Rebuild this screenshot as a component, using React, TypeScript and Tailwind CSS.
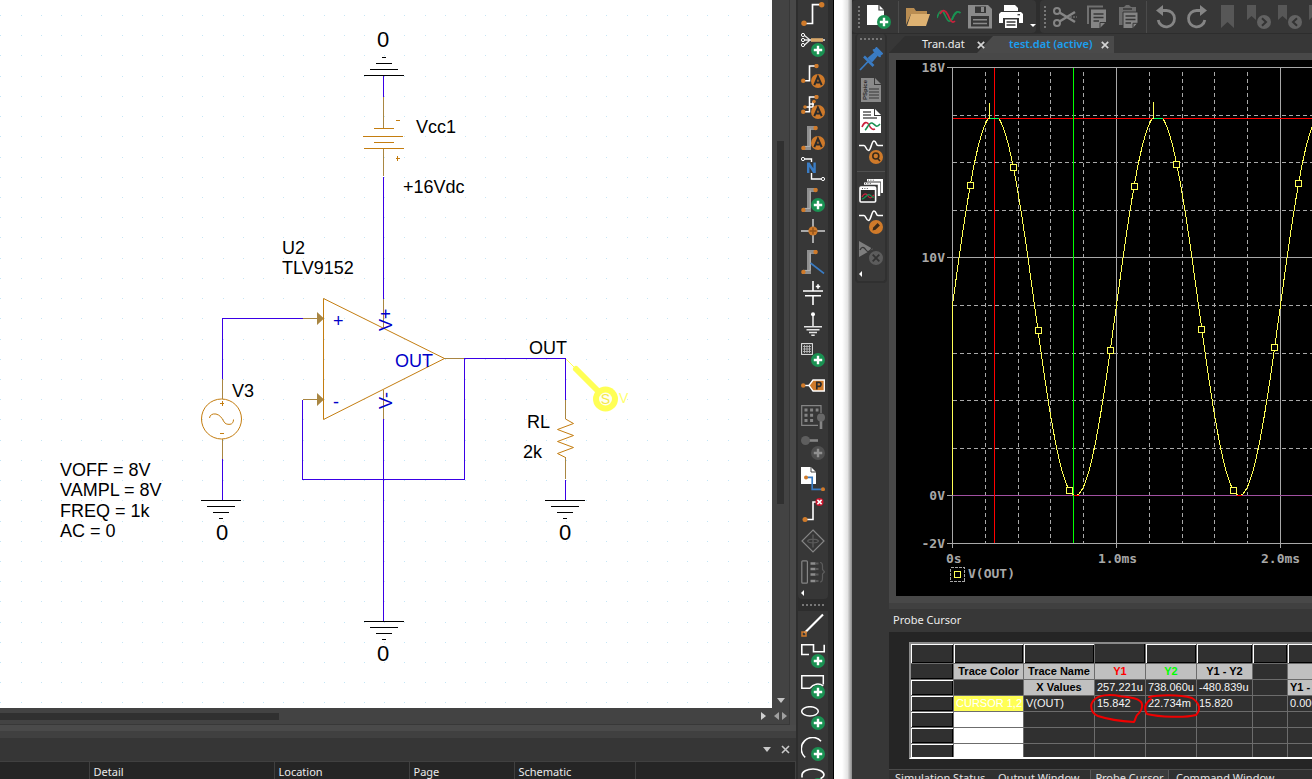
import type { ReactNode } from 'react';

const BUS = '#8f8f8f';
const ORANGE = '#cf7a2a';
const GRAY = '#858585';

/* ---------- shared icon parts ---------- */

function Icon({ children }: { children: ReactNode }) {
  return (
    <svg width="24" height="24" viewBox="0 0 24 24" fill="none" aria-hidden="true">
      {children}
    </svg>
  );
}

function Plus({ fill = '#1a9152', stroke = '#fff' }: { fill?: string; stroke?: string }) {
  return (
    <g>
      <circle cx="17" cy="17" r="7" fill={fill} />
      <path d="M17 12.8V21.2M12.8 17H21.2" stroke={stroke} strokeWidth="2.4" />
    </g>
  );
}

function BadgeA() {
  return (
    <g>
      <circle cx="17" cy="17" r="7" fill={ORANGE} />
      <path d="M13.3 21.2L16.9 12.6L20.7 21.2M14.6 18.6H19.4" stroke="#2b2b2b" strokeWidth="2" />
    </g>
  );
}

function Dot({ x, y, r = 2.2 }: { x: number; y: number; r?: number }) {
  return <circle cx={x} cy={y} r={r} fill={ORANGE} />;
}

function BusLine() {
  return (
    <g>
      <path d="M2 22H8V2H14" stroke={BUS} strokeWidth="4" />
      <path d="M2 20.4H9.2V2.6" stroke="#b4b4b4" strokeWidth="1" />
      <Dot x={2.4} y={22} />
      <Dot x={14.6} y={2} />
    </g>
  );
}

/* ---------- schematic toolbar ---------- */

const drawTools = [
  {
    label: 'Place wire',
    icon: (
      <>
        <path d="M3 21.5H11.5V2.7H20" stroke="#fff" strokeWidth="1.7" />
        <Dot x={3} y={21.3} r={2.7} />
        <Dot x={20.7} y={2.7} r={2.7} />
      </>
    ),
  },
  {
    label: 'Place net group',
    icon: (
      <>
        <path d="M3.5 2.5L9 7L3.5 12M3.5 7H24" stroke="#e8e8e8" strokeWidth="1.3" />
        <circle cx="2" cy="2" r="1.6" stroke="#fff" />
        <circle cx="2" cy="7" r="1.6" stroke="#fff" />
        <circle cx="2" cy="12" r="1.6" stroke="#fff" />
        <path d="M10 7H22" stroke="#d9a86a" strokeWidth="3.6" />
        <Plus />
      </>
    ),
  },
  {
    label: 'Auto connect two points',
    icon: (
      <>
        <path d="M2 16.7H8.5V2H15" stroke="#fff" strokeWidth="1.6" />
        <Dot x={2.2} y={16.7} />
        <Dot x={15.5} y={2} />
        <BadgeA />
      </>
    ),
  },
  {
    label: 'Auto connect multi points',
    icon: (
      <>
        <path d="M2 16.7H8.5V2H15M4 12H12V7H13M8.5 9H13" stroke="#fff" strokeWidth="1.5" />
        <Dot x={2.2} y={16.7} />
        <Dot x={15.5} y={2} />
        <Dot x={4} y={12} r={1.8} />
        <Dot x={13} y={6.6} r={1.8} />
        <BadgeA />
      </>
    ),
  },
  { label: 'Auto connect to bus', icon: <><BusLine /><BadgeA /></> },
  {
    label: 'Place net alias',
    icon: (
      <>
        <path d="M3.5 2H10.5V5M10.5 16V22H20" stroke="#fff" strokeWidth="1.4" />
        <circle cx="2" cy="2" r="1.6" stroke="#fff" />
        <circle cx="22" cy="22" r="1.6" stroke="#fff" />
        <path d="M6 5.5H8.6L12.4 11.4V5.5H14.8V16H12.2L8.4 10V16H6Z" fill="#3a7cc4" />
      </>
    ),
  },
  { label: 'Place bus', icon: <><BusLine /><Plus /></> },
  {
    label: 'Place junction',
    icon: (
      <>
        <path d="M12 0V24M0 12H24" stroke="#d0d0d0" strokeWidth="1.5" />
        <circle cx="12" cy="12" r="4.6" fill={ORANGE} />
        <path d="M12 8.5V15.5M8.5 12H15.5" stroke="#8f531c" strokeWidth="1.4" />
      </>
    ),
  },
  { label: 'Place bus entry', icon: <><BusLine /><path d="M9.5 13L23 23.5" stroke="#3a7cc4" strokeWidth="1.6" /></> },
  {
    label: 'Place power',
    icon: <path d="M12 0V10M2 10H22M4 14.7H20M12 14.7V24M14.8 5.5H19.2M17 3.3V7.7" stroke="#fff" strokeWidth="1.6" />,
  },
  {
    label: 'Place ground',
    icon: (
      <>
        <path d="M12 2V14.7M3 14.7H21M5.5 17.7H18.5M8 20.5H16M10.3 23.2H13.7" stroke="#e4e4e4" strokeWidth="1.6" />
        <circle cx="12" cy="2.2" r="2" fill="#fff" />
      </>
    ),
  },
  {
    label: 'Place hierarchical block',
    icon: (
      <>
        <rect x=".6" y=".6" width="10.8" height="10.8" stroke="#e8e8e8" />
        <path d="M3.5 2V10M6 2V10M8.5 2V10M2 3.5H10M2 6H10M2 8.5H10" stroke="#b9b9b9" strokeWidth=".9" />
        <Plus />
      </>
    ),
  },
  {
    label: 'Place port',
    icon: (
      <>
        <path d="M3 11.5H8" stroke="#fff" strokeWidth="1.4" />
        <Dot x={2.2} y={11.5} />
        <path d="M8 11.5L12 6H23.3V17H12Z" fill={ORANGE} stroke="#fff" strokeWidth="1.3" />
        <path d="M15.8 15.6V8.3H18A2 2 0 0 1 18 12.4H15.8" stroke="#2b2b2b" strokeWidth="1.7" />
      </>
    ),
  },
  {
    label: 'Place pin array',
    icon: (
      <>
        <path d="M20 8V.7H.7V20.3H17" stroke={GRAY} strokeWidth="1.2" />
        <path d="M3.5 5H17.5M3.5 10.3H13M3.5 15.6H13" stroke={GRAY} strokeWidth="3" strokeDasharray="3 2.6" />
        <path d="M20 14V24" stroke={GRAY} strokeWidth="2.6" />
        <circle cx="20" cy="12.5" r="4" fill="#686868" />
      </>
    ),
  },
  {
    label: 'Place pin',
    icon: (
      <>
        <path d="M8 4.5H17" stroke={GRAY} strokeWidth="2.6" />
        <circle cx="4.5" cy="4.5" r="4.5" fill="#5e5e5e" />
        <Plus fill="#505050" stroke="#909090" />
      </>
    ),
  },
  {
    label: 'Place off-page connector',
    icon: (
      <>
        <path d="M0 0H10L15 5V17H0Z" fill="#fff" />
        <path d="M10 0V5H15" stroke="#444" />
        <path d="M5 10.4H11.2V22.3H21" stroke="#3a7cc4" strokeWidth="1.7" />
        <Dot x={5} y={10.4} r={2} />
        <Dot x={22} y={22.2} r={2} />
      </>
    ),
  },
  {
    label: 'Place no connect',
    icon: (
      <>
        <path d="M4 21.5H12V4H16" stroke="#fff" strokeWidth="1.6" />
        <Dot x={4} y={21.5} r={2.5} />
        <circle cx="18.5" cy="4" r="4" fill="#c8142c" />
        <path d="M16.4 1.9L20.6 6.1M20.6 1.9L16.4 6.1" stroke="#fff" strokeWidth="1.5" />
      </>
    ),
  },
  {
    label: 'Place differential pair',
    icon: (
      <>
        <path d="M12 1L23 12L12 23L1 12Z" stroke={GRAY} strokeWidth="1.2" />
        <path d="M12 5.5V18.5M6.5 12C8 9.5 16 9.5 17.5 12C16 14.5 8 14.5 6.5 12" stroke="#5c5c5c" strokeWidth="1.3" />
      </>
    ),
  },
  {
    label: 'Place connector',
    icon: (
      <>
        <rect x=".8" y=".8" width="5.6" height="22.4" rx="1" stroke={GRAY} strokeWidth="1.2" />
        <path d="M9.5 3.5H14.5M9.5 9H14.5M9.5 14.5H14.5M9.5 21H14.5" stroke="#8c8c8c" strokeWidth="2.6" />
        <path d="M14 3.5H17.5M14 9H17.5M14 14.5H17.5M14 21H17.5" stroke="#5c5c5c" strokeWidth="2.2" />
        <path d="M19 2.5C21 2.5 21.5 4 21.5 6V9.5L23.5 11.8L21.5 14V18C21.5 20.5 21 22 19 22" stroke="#5c5c5c" strokeWidth="1.2" />
      </>
    ),
  },
];

const shapeTools = [
  {
    label: 'Place line',
    icon: (
      <>
        <path d="M3.5 20L22 1.5" stroke="#fff" strokeWidth="2.2" />
        <rect x="1" y="19" width="4" height="4" stroke={ORANGE} strokeWidth="1.5" />
      </>
    ),
  },
  { label: 'Place polyline', icon: <><path d="M8 10.5H.8V.8H12.5V7.8H23.2V.8" stroke="#fff" strokeWidth="1.6" /><Plus /></> },
  {
    label: 'Place rectangle',
    icon: (
      <>
        <path d="M9 13.2H.8V.8H22.3V9.5M9 13.2C12 9 18 7.5 22.3 11" stroke="#fff" strokeWidth="1.5" />
        <Plus />
      </>
    ),
  },
  { label: 'Place ellipse', icon: <><ellipse cx="9" cy="5.3" rx="8.3" ry="4.6" stroke="#fff" strokeWidth="1.5" /><Plus /></> },
  { label: 'Place arc', icon: <><path d="M20 4.2A11.3 11.3 0 1 0 4.2 20.3" stroke="#fff" strokeWidth="1.6" /><Plus /></> },
  { label: 'Place elliptical arc', icon: <><path d="M1 9.5V7C1 3.5 6 1 12 1S23 3.5 23 7C23 9 21 10 19 11" stroke="#fff" strokeWidth="1.6" /><Plus /></> },
];

function DotsRow({ vertical = false }: { vertical?: boolean }) {
  return vertical ? (
    <div className="h-[22px] w-[2px] shrink-0 bg-[repeating-linear-gradient(to_bottom,#777_0_2px,transparent_2px_4px)]" />
  ) : (
    <div className="h-[2px] w-[22px] bg-[repeating-linear-gradient(to_right,#777_0_2px,transparent_2px_4px)]" />
  );
}

function ToolButton({ label, children }: { label: string; children: ReactNode }) {
  return (
    <button aria-label={label} className="block h-6 w-6 shrink-0">
      <Icon>{children}</Icon>
    </button>
  );
}

function SchematicToolbar() {
  return (
    <div className="flex w-[38px] shrink-0 flex-col overflow-hidden border-r border-black bg-[#2d2d2d] pr-[5px] pl-[2px]">
      <div className="flex shrink-0 flex-col items-center gap-[7px] rounded-b bg-[#373737] pt-[2px] pb-[2px]">
        {drawTools.map((t) => (
          <ToolButton key={t.label} label={t.label}>{t.icon}</ToolButton>
        ))}
        <div className="-mt-[2px] flex h-2 w-6 items-center">
          <span className="border-y-[3px] border-r-[3px] border-y-transparent border-r-white" />
        </div>
      </div>
      <div className="flex h-[12px] shrink-0 items-center justify-center"><DotsRow /></div>
      <div className="flex min-h-0 flex-1 flex-col items-center gap-[7px] bg-[#373737] pt-[2px]">
        {shapeTools.map((t) => (
          <ToolButton key={t.label} label={t.label}>{t.icon}</ToolButton>
        ))}
      </div>
    </div>
  );
}

/* ---------- schematic page ---------- */

const WIRE = '#3a00e6';
const PART = '#c47d10';
const PIN = '#a98642';

function Ground({ x, y, up = false }: { x: number; y: number; up?: boolean }) {
  const s = up ? -1 : 1;
  return (
    <path
      d={`M${x - 20} ${y}H${x + 20}M${x - 14} ${y + 6 * s}H${x + 14}M${x - 8} ${y + 12 * s}H${x + 8}M${x - 2} ${y + 18 * s}H${x + 2}`}
      stroke="#000"
    />
  );
}

function GridDots() {
  const dots: string[] = [];
  for (let r = 0; r < 60; r++) {
    for (let c = 0; c < 100; c++) {
      dots.push(`M${Math.round(0.4 + c * 20.2)} ${Math.round(15 + r * 20.22)}.5h1`);
    }
  }
  return <path d={dots.join('')} stroke="#c4e6f6" />;
}

function Schematic() {
  return (
    <svg className="h-full w-full bg-white" fill="none" role="img" aria-label="Schematic page">
      <g shapeRendering="crispEdges">
        <GridDots />
        <g stroke={WIRE}>
          <path d="M383.5 76V97M383.5 177V299M383.5 419V621" />
          <path d="M222.5 379V318.5H303M222.5 459V500" />
          <path d="M302.5 400V479.5H464.5V358.5H565.5V400M565.5 480V500" />
        </g>
        <g stroke={PIN}>
          <path d="M383.5 97V128M383.5 149V176M383.5 299V328M383.5 390V419" />
          <path d="M303 318.5H323M303 399.5H323M444 358.5H464M222.5 379V399M222.5 439V459M565.5 400V419M565.5 457V479" />
        </g>
        <path d="M374 128.5H394M363 136.5H403M374 142.5H394M364 148.5H404M396 120.5H400M396 158.5H400M397.5 156V161" stroke={PART} />
        <path d="M220 403.5H224M222.5 401V406M220 433.5H224" stroke={PART} />
        <Ground x={384} y={75.5} up />
        <Ground x={384} y={621.5} />
        <Ground x={221} y={500.5} />
        <Ground x={565} y={500.5} />
      </g>
      <path d="M317 312L324 318.5L317 325ZM317 393L324 399.5L317 406Z" fill={PIN} />
      <g stroke={PART}>
        <path d="M323.5 298.5L444.5 358.5L323.5 419.5Z" />
        <circle cx="221.5" cy="419" r="20" />
        <path d="M209.5 418C210 415 212 413.5 216 414C220 415 222 418 223.5 421C225 424 227 424.5 230 424.3C232.5 424 233.5 422 233.5 419.5" />
        <path d="M565.5 419L573.5 423.5L557.5 429.5L573.5 435.5L557.5 441.5L573.5 447.5L557.5 453.5L565.5 457.5" />
      </g>
      <path d="M566 359L576 369" stroke="#ffff55" />
      <path d="M576 369L600 393" stroke="#ffff55" strokeWidth="6" strokeLinecap="round" />
      <circle cx="605.5" cy="399" r="12.5" fill="#ffff55" />
      <circle cx="605.5" cy="399" r="6.5" fill="#fffff0" />
      <g className="font-['Liberation_Sans',Arial,sans-serif] text-[18px]" fill="#000">
        <g className="text-[22px]" textAnchor="middle">
          <text x="383" y="47">0</text>
          <text x="383" y="661">0</text>
          <text x="222" y="540">0</text>
          <text x="565" y="540">0</text>
        </g>
        <text x="416" y="133">Vcc1</text>
        <text x="403" y="193">+16Vdc</text>
        <text x="282" y="254">U2</text>
        <text x="282" y="274">TLV9152</text>
        <text x="232" y="397">V3</text>
        <text x="529" y="354">OUT</text>
        <text x="527" y="428">RL</text>
        <text x="523" y="458">2k</text>
        <text x="60" y="476">VOFF = 8V</text>
        <text x="60" y="496">VAMPL = 8V</text>
        <text x="60" y="517">FREQ = 1k</text>
        <text x="60" y="537">AC = 0</text>
        <g fill="#0000c8">
          <text x="395" y="367">OUT</text>
          <text x="333" y="327">+</text>
          <text x="333" y="408">-</text>
          <text transform="translate(392 331) rotate(-90)">V+</text>
          <text transform="translate(392 409) rotate(-90)">V-</text>
        </g>
        <text x="605.5" y="404" textAnchor="middle" className="text-[14px]" fill="#f4e94a">S</text>
        <text x="619" y="403" className="text-[14px]" fill="#ffff70">V</text>
      </g>
    </svg>
  );
}

const resultColumns = [
  { name: '', width: 'w-[89px]' },
  { name: 'Detail', width: 'w-[185px]' },
  { name: 'Location', width: 'w-[135px]' },
  { name: 'Page', width: 'w-[105px]' },
  { name: 'Schematic', width: 'w-[121px]' },
  { name: '', width: '' },
];

function SchematicWindow() {
  return (
    <section className="flex min-w-0 flex-1 bg-[#484848]">
      <div className="flex min-w-0 flex-1 flex-col">
        <div className="mr-[6px] flex min-h-0 flex-1 border-r border-[#383838] bg-[#434343]">
          <div className="min-w-0 flex-1 overflow-hidden"><Schematic /></div>
          <div className="flex w-[17px] flex-col items-center justify-between">
            <div className="mt-[141px] h-[363px] w-[7px] bg-[#303030]" />
            <div className="mb-[5px] border-x-[4px] border-t-[5px] border-x-transparent border-t-[#c4c4c4]" />
          </div>
        </div>
        <div className="mr-[6px] flex h-[17px] items-center justify-between border-r border-b border-[#383838] bg-[#434343] pr-[2px]">
          <div className="h-[7px] w-[279px] bg-[#303030]" />
          <div className="flex items-center gap-[3px]">
            <span className="mr-[5px] border-y-[4px] border-l-[5px] border-y-transparent border-l-[#d0d0d0]" />
            <span className="border-y-[4px] border-r-[5px] border-y-transparent border-r-[#a0a0a0]" />
            <span className="border-y-[4px] border-l-[5px] border-y-transparent border-l-[#a0a0a0]" />
          </div>
        </div>
        <div className="h-[6px] bg-[#4a4a4a]" />
        <div className="h-[7px] bg-[#404040]" />
        <div className="flex h-[23px] items-center justify-end gap-[10px] bg-[#363636] pr-[6px]">
          <button aria-label="Panel menu" className="border-x-[4px] border-t-[5px] border-x-transparent border-t-[#c8c8c8]" />
          <button aria-label="Close panel">
            <svg width="9" height="9" viewBox="0 0 9 9" stroke="#c8c8c8" strokeWidth="1.6"><path d="M1 1L8 8M8 1L1 8" /></svg>
          </button>
        </div>
        <div className="h-[18px] overflow-hidden bg-[#252525]">
          <table className="w-full table-fixed border-collapse text-left text-[11px] leading-[18px] text-[#eaeaea]">
            <thead>
              <tr>
                {resultColumns.map((c, i) => (
                  <th key={i} className={`h-[20px] border-t border-r border-[#404040] py-0 pl-1 font-normal ${c.width}`}>{c.name}</th>
                ))}
              </tr>
            </thead>
          </table>
        </div>
      </div>
      <SchematicToolbar />
    </section>
  );
}

/* ---------- probe window ---------- */

const fileTools = [
  {
    label: 'New simulation',
    icon: <><path d="M0 0H12L17 5V20H0Z" fill="#fff" /><path d="M12 0V5H17" stroke="#373737" strokeWidth="1.2" /><Plus /></>,
  },
  null,
  {
    label: 'Open',
    icon: <><path d="M0 20V3H8L10 6H21V9H5Z" fill="#b98d52" /><path d="M5 9H24L20 21H1Z" fill="#deb272" /></>,
  },
  {
    label: 'Append waveform',
    icon: (
      <>
        <path d="M0 13C2 6 5 4 7 8C9 12 11 18 14 15.5C16 13 17 9 20 7" stroke="#1a9152" strokeWidth="1.7" />
        <path d="M3 9C6 3 9 6 11 10C13 15 15 19 18 16" stroke="#c9203c" strokeWidth="1.7" />
        <path d="M15 15C17 8 20 5 23.5 8" stroke="#1a9152" strokeWidth="1.7" />
      </>
    ),
  },
  {
    label: 'Save',
    icon: (
      <>
        <path d="M0 0H20L24 4V23.5H0Z" fill="#8a8a8a" />
        <path d="M7 1.5H18V8H7ZM3 11H21V21.5H3Z" fill="#373737" />
        <path d="M13 2H16V7H13ZM5 14H19V15.5H5ZM5 17.7H19V19.2H5Z" fill="#8a8a8a" />
      </>
    ),
  },
  {
    label: 'Print',
    icon: (
      <>
        <path d="M5 0H16L19 3V6H5Z" fill="#fff" />
        <path d="M2 7H22L24 9V18H20V13H4V18H0V9Z" fill="#fff" />
        <path d="M6 14.5H18V23H6Z" fill="#fff" />
        <path d="M7.5 17H16.5M7.5 20H16.5" stroke="#373737" strokeWidth="1.3" />
        <path d="M18.5 9.7H21" stroke="#373737" strokeWidth="1.3" />
      </>
    ),
  },
];

const editTools = [
  {
    label: 'Cut',
    icon: (
      <>
        <circle cx="4" cy="6" r="3" stroke={GRAY} strokeWidth="2" />
        <circle cx="4" cy="18" r="3" stroke={GRAY} strokeWidth="2" />
        <path d="M6.5 7.5L22 17M6.5 16.5L22 7" stroke={GRAY} strokeWidth="2.6" />
        <path d="M17 12H24" stroke={GRAY} strokeDasharray="2 1" />
      </>
    ),
  },
  {
    label: 'Copy',
    icon: (
      <>
        <path d="M4 19V1.5H19" stroke="#707070" strokeWidth="2" />
        <path d="M7 4.5H22V17L16 23H7Z" fill={GRAY} />
        <path d="M9.5 9H19.5M9.5 12.5H19.5M9.5 16H15" stroke="#373737" strokeWidth="1.5" />
        <path d="M16 23.5V17.5H22" stroke="#373737" />
      </>
    ),
  },
  {
    label: 'Paste',
    icon: (
      <>
        <path d="M4 2H9L11 0H14L16 2H21V20H4Z" fill="#6c6c6c" />
        <path d="M8 7H23V18L18 23.5H8Z" fill={GRAY} stroke="#373737" />
        <path d="M10.5 11H20.5M10.5 14.5H20.5M10.5 18H16M8 4H17" stroke="#373737" strokeWidth="1.4" />
        <path d="M18 23V18.3H23" stroke="#373737" />
      </>
    ),
  },
  null,
  {
    label: 'Undo',
    icon: <><path d="M7 5.5H12.5A8.2 8.2 0 1 1 4.2 15" stroke={GRAY} strokeWidth="2.8" /><path d="M9 0V11L2 5.5Z" fill={GRAY} /></>,
  },
  {
    label: 'Redo',
    icon: <><path d="M17 5.5H11.5A8.2 8.2 0 1 0 19.8 15" stroke={GRAY} strokeWidth="2.8" /><path d="M15 0V11L22 5.5Z" fill={GRAY} /></>,
  },
  { label: 'Bookmark', icon: <path d="M5 0H18V23L11.5 17L5 23Z" fill="#575757" /> },
  {
    label: 'Next bookmark',
    icon: <><path d="M0 0H9V15L4.5 11L0 15Z" fill="#575757" /><circle cx="17" cy="17" r="7" fill="#626262" /><path d="M15 13.2L19 17L15 20.8" stroke="#333" strokeWidth="2" /></>,
  },
  {
    label: 'Previous bookmark',
    icon: <><path d="M0 0H9V15L4.5 11L0 15Z" fill="#575757" /><circle cx="17" cy="17" r="7" fill="#626262" /><path d="M19 13.2L15 17L19 20.8" stroke="#333" strokeWidth="2" /></>,
  },
  {
    label: 'Clear bookmarks',
    icon: <><path d="M0 0H9V15L4.5 11L0 15Z" fill="#575757" /><circle cx="17" cy="17" r="7" fill="#626262" /></>,
  },
];

const probeTools = [
  {
    label: 'Pin',
    icon: (
      <>
        <path d="M1 23L10 13.5" stroke="#3a7cc4" strokeWidth="1.8" />
        <path d="M5 9.5L14.5 19" stroke="#3a7cc4" strokeWidth="2.6" />
        <path d="M8.5 11L15.5 5L19 8.5L13 15.5Z" fill="#3a7cc4" />
        <path d="M14 2.5L21.5 10M17.5 0.8L23.2 6.5L20 9L15 4Z" fill="#3a7cc4" stroke="#3a7cc4" strokeWidth="1.6" />
      </>
    ),
  },
  {
    label: 'Simulation output',
    icon: (
      <>
        <path d="M2 0H15V7H22V24H2Z" fill="#8a8a8a" />
        <path d="M16 0V6H22Z" fill="#8a8a8a" />
        <path d="M10 11H20M10 14H20M10 17H20M10 20H20" stroke="#373737" strokeWidth="1.2" />
        <text transform="translate(8 22) rotate(-90)" className="font-['Liberation_Sans',sans-serif] text-[6px] font-bold" fill="#2b2b2b">PSpice</text>
      </>
    ),
  },
  {
    label: 'Waveform document',
    icon: (
      <>
        <path d="M1 0H15V7H22V24H1Z" fill="#fff" />
        <path d="M16 0V6H22Z" fill="#fff" />
        <path d="M4 3H12M4 6H12M4 9H18" stroke="#555" strokeWidth="1.3" />
        <path d="M3 18C5 13 8 12 10 16S14 21 16 20" stroke="#c9203c" strokeWidth="1.6" />
        <path d="M6 21C8 20 10 13 13 14S17 20 21 15" stroke="#1a9152" strokeWidth="1.6" />
      </>
    ),
  },
  {
    label: 'Find trace',
    icon: (
      <>
        <path d="M0 5.5H5C7 5.5 7 10.5 9.5 10.5S12.5 1 15 1S17 5.5 19 5.5H24" stroke="#fff" strokeWidth="1.6" />
        <circle cx="17" cy="17" r="7" fill={ORANGE} />
        <circle cx="16.8" cy="16" r="3" stroke="#3a2a1a" strokeWidth="1.6" />
        <path d="M18.8 18.5L21 21" stroke="#3a2a1a" strokeWidth="1.6" />
      </>
    ),
  },
  null,
  {
    label: 'Window list',
    icon: (
      <>
        <path d="M8 1.2H23V14" stroke="#fff" strokeWidth="2.4" />
        <path d="M5 4.6H20V17" stroke="#fff" strokeWidth="2.4" />
        <path d="M9 1.2H16M6 4.6H13" stroke="#555" strokeWidth="1" strokeDasharray="1 1.4" />
        <rect x="1" y="8" width="15.6" height="15" rx="1" fill="#2b2b2b" stroke="#fff" strokeWidth="1.6" />
        <path d="M1 9.5H16.6" stroke="#fff" strokeWidth="3" />
        <path d="M3 9.5H9" stroke="#555" strokeWidth="1" strokeDasharray="1 1.4" />
        <path d="M3 18C5 14 7 14 9 17S12 19 15 16" stroke="#c9203c" strokeWidth="1.3" />
        <path d="M3 20C6 20 8 14 11 16S13 19 15 18" stroke="#1a9152" strokeWidth="1.3" />
      </>
    ),
  },
  {
    label: 'Edit trace',
    icon: (
      <>
        <path d="M0 5.5H5C7 5.5 7 10.5 9.5 10.5S12.5 1 15 1S17 5.5 19 5.5H24" stroke="#fff" strokeWidth="1.6" />
        <circle cx="17" cy="17" r="7" fill={ORANGE} />
        <path d="M13.5 20.5L14.2 17.5L18.6 13.1L20.9 15.4L16.5 19.8Z" fill="#3a2a1a" />
      </>
    ),
  },
  {
    label: 'Stop simulation',
    icon: (
      <>
        <path d="M0 0L14 8L0 16Z" fill="#7e7e7e" />
        <path d="M1 9C3 5 5 6 7 9S11 10 13 7" stroke="#373737" strokeWidth="1.3" />
        <circle cx="17" cy="17" r="7" fill="#5c5c5c" />
        <path d="M13.7 13.7L20.3 20.3M20.3 13.7L13.7 20.3" stroke="#333" strokeWidth="1.8" />
      </>
    ),
  },
];

function TopToolbar() {
  const sep = 'h-[32px] w-px shrink-0 bg-[#4b4b4b]';
  return (
    <div className="flex h-[34px] shrink-0 overflow-hidden bg-[#2d2d2d]">
      <div className="flex h-[33px] shrink-0 items-center gap-[7px] rounded bg-[#373737] pl-[6px]">
        <DotsRow vertical />
        {fileTools.map((t, i) => t ? <ToolButton key={i} label={t.label}>{t.icon}</ToolButton> : <span key={i} className={sep} />)}
        <span className="mt-[18px] border-x-[3px] border-t-[3px] border-x-transparent border-t-white" />
      </div>
      <div className="ml-1 flex h-[33px] min-w-0 flex-1 items-center gap-[7px] rounded-l bg-[#373737] pl-1">
        <DotsRow vertical />
        {editTools.map((t, i) => t ? <ToolButton key={i} label={t.label}>{t.icon}</ToolButton> : <span key={i} className={sep} />)}
      </div>
    </div>
  );
}

/* plot scale: pixels per ms and per volt */
const X0 = 56.5;
const Y0 = 435.5;
const MS = 164;
const VOLT = 23.8;
const SPAN = 8;

const tracePoints = Array.from({ length: SPAN * 164 }, (_, i) => {
  const v = Math.min(15.842, 8 + 8 * Math.sin((2 * Math.PI * i) / MS));
  return `${(X0 + i).toFixed(1)},${(Y0 - v * VOLT).toFixed(1)}`;
}).join(' ');

const traceMarkers = [
  [74, 126], [117, 108], [142, 271], [173, 431], [214, 291], [238, 127],
  [280, 105], [305, 270], [337, 431], [378, 288], [402, 124],
];

const minorX = Array.from({ length: SPAN * 5 }, (_, i) => i).filter((i) => i % 5 !== 0);
const majorX = Array.from({ length: SPAN }, (_, i) => i);
const minorY = [2, 4, 6, 8, 12, 14, 16];

function Plot() {
  return (
    <svg className="h-full w-full bg-black" fill="none" role="img" aria-label="V(OUT) trace">
      <g shapeRendering="crispEdges">
        <g stroke="#a8a8a8" strokeDasharray="4 3">
          {minorX.map((i) => (
            <path key={i} d={`M${Math.floor(X0 + (i * MS) / 5)}.5 12V483`} />
          ))}
          {minorY.map((v) => (
            <path key={v} d={`M57 ${Math.round(Y0 - v * VOLT)}.5H2000`} />
          ))}
        </g>
        <g stroke="#a8a8a8">
          {majorX.map((i) => (
            <path key={i} d={`M${X0 + i * MS} 8V488`} />
          ))}
          <path d="M51 7.5H2000M51 197.5H2000M51 483.5H2000M51 435.5H57" />
        </g>
        <path d="M57 435.5H2000" stroke="#a050a0" />
        <path d="M56.5 245V435" stroke="#ffff55" />
        <path d="M57 58.5H2000M98.5 8V483" stroke="#f00" />
        <path d="M177.5 8V483" stroke="#00ff00" />
        <path d="M93.5 43V58M257.5 42V58" stroke="#ffff55" />
      </g>
      <polyline points={tracePoints} stroke="#ffff55" shapeRendering="crispEdges" />
      <g shapeRendering="crispEdges">
        <path d="M94 58.5H103M258 58.5H267" stroke="#00ff60" />
        <path d="M178 435.5H183M341 435.5H346" stroke="#f00" />
      </g>
      <g shapeRendering="crispEdges" stroke="#ffff55" fill="#000">
        {traceMarkers.map(([x, y]) => (
          <rect key={x} x={x - 2.5} y={y - 3.5} width="6" height="6" />
        ))}
        <rect x="58.5" y="511.5" width="6" height="6" />
      </g>
      <rect x="54.5" y="507.5" width="14" height="14" stroke="#a8a8a8" strokeDasharray="3 1" shapeRendering="crispEdges" />
      <g className="font-['DejaVu_Sans_Mono',monospace] text-[13px] font-bold" fill="#a8a8a8">
        <g textAnchor="end">
          <text x="49" y="12">18V</text>
          <text x="49" y="202">10V</text>
          <text x="49" y="440">0V</text>
          <text x="49" y="488">-2V</text>
        </g>
        <text x="50" y="503">0s</text>
        <text x="202" y="503">1.0ms</text>
        <text x="365" y="503">2.0ms</text>
        <text x="72" y="518">V(OUT)</text>
      </g>
    </svg>
  );
}

const head = 'bg-[#c0c0c0] text-center font-bold text-black';
const raised = 'shadow-[inset_1px_1px_0_#fff,inset_-1px_-1px_0_#000]';
const flat = 'shadow-[inset_-1px_-1px_0_#000]';

function CursorTable() {
  return (
    <div className="relative ml-[20px] h-[117px] overflow-hidden border-2 border-r-0 border-[#8a8a8a] border-b-white bg-[#303030]">
      <table className="w-[480px] table-fixed border-separate border-spacing-0 font-['Liberation_Sans',Arial,sans-serif] text-[11px] leading-[15px] whitespace-nowrap text-[#f4f4f4] [&_td]:overflow-hidden [&_td]:border-r [&_td]:border-b [&_td]:border-[#6c6c6c] [&_td]:py-0 [&_th]:border-r [&_th]:border-b [&_th]:border-[#6c6c6c] [&_th]:p-0">
        <colgroup>
          <col className="w-[43px]" />
          <col className="w-[70px]" />
          <col className="w-[71px]" />
          <col className="w-[51px]" />
          <col className="w-[51px]" />
          <col className="w-[56px]" />
          <col className="w-[35px]" />
          <col />
        </colgroup>
        <tbody>
          <tr className="h-[20px]">
            {[raised, raised, raised, flat, raised, raised, raised, raised].map((c, i) => <td key={i} className={c} />)}
          </tr>
          <tr className="h-[16px]">
            <td className={flat} />
            <th className={head}>Trace Color</th>
            <th className={head}>Trace Name</th>
            <th className="bg-[#c0c0c0] text-center font-bold text-[#ff0000]">Y1</th>
            <th className="bg-[#c0c0c0] text-center font-bold text-[#00ff00]">Y2</th>
            <th className={head}>Y1 - Y2</th>
            <td />
            <td className="bg-[#c0c0c0]" />
          </tr>
          <tr className="h-[16px]">
            <td className={raised} />
            <td />
            <th className={head}>X Values</th>
            <td className="pl-[2px]">257.221u</td>
            <td className="pl-[2px]">738.060u</td>
            <td className="pl-[2px]">-480.839u</td>
            <td />
            <td className="bg-[#c0c0c0] pl-[2px] font-bold text-black">Y1 - Y1(Cursor1)</td>
          </tr>
          <tr className="h-[16px]">
            <td className={raised} />
            <td className="bg-[#ffff55] pl-[2px] text-white">CURSOR 1,2</td>
            <td className="pl-[2px]">V(OUT)</td>
            <td className="pl-[2px]">15.842</td>
            <td className="pl-[2px]">22.734m</td>
            <td className="pl-[2px]">15.820</td>
            <td />
            <td className="pl-[2px]">0.000</td>
          </tr>
          {[0, 1, 2].map((r) => (
            <tr key={r} className={r === 2 ? 'h-[15px]' : 'h-[16px]'}>
              <td className={raised} />
              <td className="bg-white" />
              <td /><td /><td /><td /><td /><td />
            </tr>
          ))}
        </tbody>
      </table>
      {/* hand drawn rings round the two cursor readings */}
      <svg className="pointer-events-none absolute top-[46px] left-[176px]" width="120" height="34" fill="none" stroke="#f00000" strokeWidth="2" strokeLinecap="round" strokeLinejoin="round">
        <path d="M33 6C22 4 11 5 7 10C2 15 4 23 11 26C20 29 30 31 47 32C49 29 48 26 52 23C56 19 56 13 53 11C48 7 38 7 31 6" />
        <path d="M64 9C57 14 57 19 60 24C72 27 98 28 109 25C114 20 113 13 105 8C92 4 70 5 62 7" />
      </svg>
    </div>
  );
}

function CloseX() {
  return <svg width="8" height="8" viewBox="0 0 8 8" stroke="#d4d4d4" strokeWidth="1.7"><path d="M.8 .8L7.2 7.2M7.2 .8L.8 7.2" /></svg>;
}

function ProbeWindow() {
  return (
    <section className="flex w-[460px] shrink-0 flex-col bg-[#373737]">
      <TopToolbar />
      <div className="flex min-h-0 flex-1">
        <div className="w-[37px] shrink-0 pr-[2px] pl-[3px]">
          <div className="flex flex-col items-center gap-[7px] rounded border-2 border-t-0 border-[#303030] bg-[#393939] pb-[3px]">
            <div className="flex h-[6px] items-center pt-1"><DotsRow /></div>
            {probeTools.map((t, i) => t
              ? <ToolButton key={i} label={t.label}>{t.icon}</ToolButton>
              : <span key={i} className="h-px w-full bg-[#505050]" />)}
            <div className="-mt-[2px] flex h-2 w-6 items-center">
              <span className="border-y-[3px] border-r-[3px] border-y-transparent border-r-white" />
            </div>
          </div>
        </div>
        <div className="flex min-w-0 flex-1 flex-col">
          <div className="flex h-[19px] items-end text-[11px]">
            <div className="flex h-[17px] w-[106px] items-center justify-between bg-[#303030] pr-[9px] pl-[33px] text-[#ececec] [clip-path:polygon(16px_0,100%_0,90px_100%,0_100%)]">
              <button>Tran.dat</button>
            </div>
            <div className="-ml-[18px] flex h-[17px] w-[137px] items-center bg-[#4a4a4a] [clip-path:polygon(16px_0,100%_0,100%_100%,0_100%)]">
              <button className="ml-[32px] font-semibold text-[#1a9ff0]">test.dat (active)</button>
              <button aria-label="Close test.dat" className="mr-[5px] ml-auto"><CloseX /></button>
            </div>
            <button aria-label="Close Tran.dat" className="relative -left-[137px] mb-1 h-2 w-2"><CloseX /></button>
          </div>
          <div className="min-h-0 flex-1 border-t-[7px] border-b-[7px] border-l-[7px] border-[#484848]">
            <Plot />
          </div>
          <div className="h-[6px] bg-[#404040]" />
          <h2 className="h-[23px] pl-1 text-[11px] leading-[22px] text-[#ececec]">Probe Cursor</h2>
          <div className="h-[137px] overflow-hidden bg-[#252525] pt-[10px]">
            <CursorTable />
          </div>
          <nav className="flex h-[10px] overflow-hidden border-t border-[#4a4a4a] bg-[#303030] text-[11px] leading-[16px] whitespace-nowrap text-[#e4e4e4]">
            <button className="h-[16px] w-[103px] shrink-0 pl-[6px] text-left">Simulation Status</button>
            <button className="h-[16px] w-[98px] shrink-0 pl-[6px] text-left">Output Window</button>
            <button className="h-[16px] w-[79px] shrink-0 border-x border-[#5a5a5a] bg-[#3c3c3c] text-center">Probe Cursor</button>
            <button className="h-[16px] shrink-0 pl-[7px] text-left">Command Window</button>
          </nav>
        </div>
      </div>
    </section>
  );
}

export default function App() {
  return (
    <main className="flex h-screen min-h-[779px] overflow-hidden font-['Noto_Sans','Open_Sans',sans-serif]">
      <SchematicWindow />
      <div className="w-[18px] shrink-0 bg-linear-to-r from-white from-45% via-[#e4e4e4] via-75% to-[#8a8a8a]" />
      <ProbeWindow />
    </main>
  );
}
